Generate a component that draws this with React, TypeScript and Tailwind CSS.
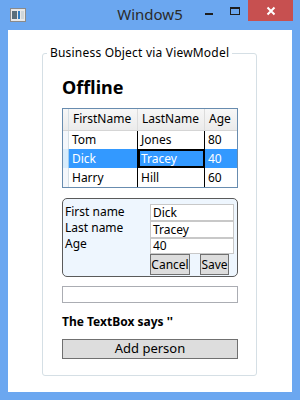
import React from "react";

const font = { fontFamily: '"Noto Sans", "Open Sans", sans-serif' };

function Cell({ children, w, sel, cur, last }: { children: React.ReactNode; w: string; sel?: boolean; cur?: boolean; last?: boolean }) {
  return (
    <div
      className={`${w} h-full flex items-center pl-[3px] text-[12px] leading-none ${last ? "" : "border-r border-black"} ${sel ? "bg-[#3399ff] text-white" : "bg-white text-black"} ${cur ? "outline outline-2 -outline-offset-2 outline-black" : ""}`}
    >
      {children}
    </div>
  );
}

function Row({ a, b, c, sel }: { a: string; b: string; c: string; sel?: boolean }) {
  return (
    <div className="flex h-[19px]">
      <div className={`w-[6px] h-full border-r ${sel ? "bg-[#d8ecfb] border-[#9fcdf0]" : "bg-[#f4f7fb] border-[#d5dfe5]"}`} />
      <Cell w="w-[69px]" sel={sel}>{a}</Cell>
      <Cell w="w-[67px]" sel={sel} cur={sel}>{b}</Cell>
      <Cell w="flex-1" sel={sel} last>{c}</Cell>
    </div>
  );
}

export default function App() {
  return (
    <div className="w-[300px] h-[400px] bg-[#6ba7f0] flex flex-col text-black" style={font}>
      {/* Title bar */}
      <div className="h-[30px] flex items-start relative">
        <div className="absolute left-[10px] top-[8px]">
          <svg width="16" height="14" viewBox="0 0 16 14">
            <rect x="0.5" y="0.5" width="15" height="13" fill="#e8e8e8" stroke="#8a8a8a" />
            <rect x="2" y="3" width="5" height="8" fill="#5a6e7a" />
            <rect x="8" y="3" width="2" height="8" fill="#2f7bbf" />
            <rect x="11" y="3" width="3" height="8" fill="#cfd6da" />
          </svg>
        </div>
        <div className="absolute left-0 right-0 top-[4px] text-center text-[15px] text-[#2a2a2a] leading-[20px]" style={{ fontFamily: '"Noto Sans", sans-serif' }}>
          Window5
        </div>
        <div className="absolute left-[205px] top-[13px] w-[8px] h-[2px] bg-[#1e1e1e]" />
        <div className="absolute left-[230px] top-[7px] w-[10px] h-[8px] border border-[#1e1e1e] border-t-2" />
        <div className="absolute left-[248px] top-0 w-[45px] h-[21px] bg-[#c75050] flex items-center justify-center">
          <svg width="10" height="10" viewBox="0 0 10 10">
            <path d="M1.5 1.5 L8.5 8.5 M8.5 1.5 L1.5 8.5" stroke="white" strokeWidth="2" />
          </svg>
        </div>
      </div>
      {/* Client area */}
      <div className="mx-[8px] h-[362px] bg-white pt-[16px] pl-[34px]">
        <fieldset className="w-[215px] h-[330px] border border-[#d5dfe5] rounded-[3px] p-0 m-0 min-w-0">
          <legend className="ml-[4px] px-[3px] text-[12px] leading-[14px] whitespace-nowrap tracking-[0.2px]">Business Object via ViewModel</legend>
          <div className="px-[19px]">
            <div className="mt-[16px] text-[18px] font-bold leading-[22px]">Offline</div>
            {/* DataGrid */}
            <div className="mt-[10px] w-[176px] h-[80px] border border-[#688caf] flex flex-col bg-white">
              <div className="flex h-[22px] bg-gradient-to-b from-[#f7f7f7] to-[#ebebeb] border-b border-[#d5d5d5]">
                <div className="w-[6px] border-r border-[#d5dfe5]" />
                <div className="w-[69px] flex items-center pl-[4px] text-[12px] border-r border-[#dcdcdc]">FirstName</div>
                <div className="w-[67px] flex items-center pl-[4px] text-[12px] border-r border-[#dcdcdc]">LastName</div>
                <div className="flex-1 flex items-center pl-[4px] text-[12px]">Age</div>
              </div>
              <Row a="Tom" b="Jones" c="80" />
              <Row a="Dick" b="Tracey" c="40" sel />
              <Row a="Harry" b="Hill" c="60" />
            </div>
            {/* Edit panel */}
            <div className="mt-[10px] w-[176px] h-[79px] border border-[#5a5a5a] rounded-[5px] bg-[#eef6fe] flex pt-[5px] pl-[2px]">
              <div className="w-[85px] flex flex-col text-[12px] leading-[16px]">
                <div>First name</div>
                <div>Last name</div>
                <div>Age</div>
              </div>
              <div className="flex flex-col w-[84px]">
                <div className="h-[17px] border border-[#c8c8c8] bg-white text-[12px] leading-[15px] pl-[2px]">Dick</div>
                <div className="h-[17px] border border-[#c8c8c8] bg-white text-[12px] leading-[15px] pl-[2px]">Tracey</div>
                <div className="h-[16px] border border-[#c8c8c8] bg-white text-[12px] leading-[14px] pl-[2px]">40</div>
                <div className="flex gap-[10px]">
                  <div className="w-[40px] h-[21px] border border-[#707070] bg-[#dddddd] text-[12px] flex items-center justify-center">Cancel</div>
                  <div className="w-[29px] h-[21px] border border-[#707070] bg-[#dddddd] text-[12px] flex items-center justify-center">Save</div>
                </div>
              </div>
            </div>
            {/* TextBox */}
            <div className="mt-[9px] w-[176px] h-[17px] border border-[#abadb3] bg-white" />
            <div className="mt-[11px] text-[12px] font-bold leading-[16px]">The TextBox says ''</div>
            <div className="mt-[9px] w-[176px] h-[20px] border border-[#707070] bg-[#dddddd] text-[13px] flex items-center justify-center">Add person</div>
          </div>
        </fieldset>
      </div>
    </div>
  );
}
